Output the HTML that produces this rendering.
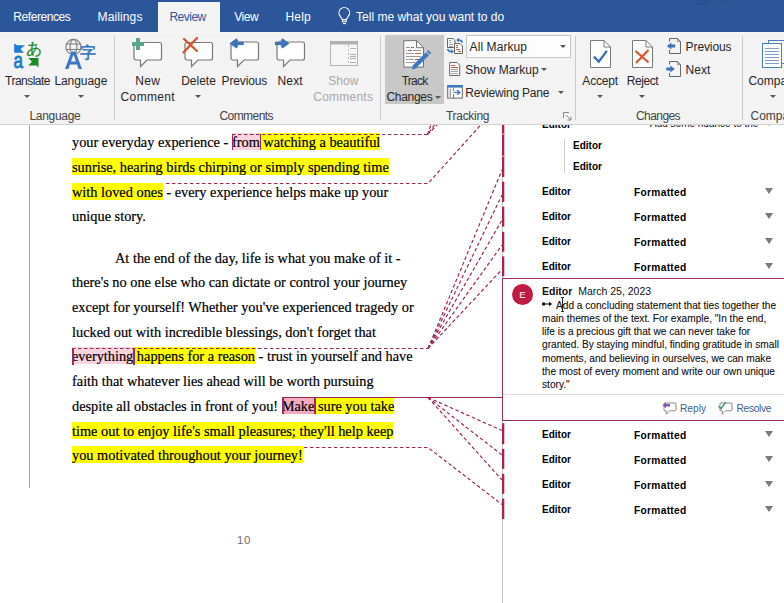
<!DOCTYPE html>
<html><head><meta charset="utf-8">
<style>
*{margin:0;padding:0;box-sizing:border-box}
html,body{width:784px;height:603px;overflow:hidden;background:#fff;position:relative}
body{font-family:"Liberation Sans",sans-serif;color:#262626}
.a{position:absolute;white-space:pre}
#tabs{position:absolute;left:0;top:0;width:784px;height:32px;background:#2b579a}
.tab{position:absolute;top:10px;font-size:12px;color:#fff;line-height:15px;white-space:pre}
#revtab{position:absolute;left:158px;top:2px;width:62px;height:30px;background:#f3f3f3}
#ribbon{position:absolute;left:0;top:32px;width:784px;height:93px;background:#f3f3f3;border-top:1px solid #f8f8f8;border-bottom:1px solid #d2d2d2}
.lbl{position:absolute;font-size:12px;line-height:15px;color:#262626;white-space:pre}
.glbl{position:absolute;top:109px;font-size:12px;line-height:15px;color:#444;white-space:pre}
.sep{position:absolute;top:36px;width:1px;height:84px;background:#c9c9c9}
.arr{position:absolute;width:0;height:0;border-left:3.5px solid transparent;border-right:3.5px solid transparent;border-top:3.5px solid #555}
.doc{position:absolute;white-space:pre;font-family:"Liberation Serif",serif;font-size:14.33px;line-height:24.6px;color:#000;-webkit-text-stroke:0.2px #000}
.hy{background:#ffff00;padding-top:1px}
.hp{background:#fad3df;padding-top:1px}
.hm{background:#f4a9bf;padding-top:1px}
.ed{position:absolute;font-weight:bold;font-size:10px;color:#000;line-height:13px}
.fm{position:absolute;font-weight:bold;font-size:10.2px;letter-spacing:0.3px;color:#000;line-height:13px}
.tri{position:absolute;width:0;height:0;border-left:4.5px solid transparent;border-right:4.5px solid transparent;border-top:6px solid #7a7a7a}
</style></head><body>

<div id="rb" style="position:absolute;left:0;top:0;width:784px;height:125px;z-index:10;overflow:hidden">
<div id="tabs">
  <div class="tab" style="left:13.3px;letter-spacing:-0.43px">References</div>
  <div class="tab" style="left:97.6px;letter-spacing:0.11px">Mailings</div>
  <div id="revtab"></div>
  <div style="position:absolute;left:696px;top:0;width:13px;height:5px;background:#2a5190"></div>
  <div style="position:absolute;left:716px;top:0;width:12px;height:3px;background:#2c5595"></div>
  <div class="tab" style="left:169.4px;color:#2b579a;letter-spacing:-0.5px">Review</div>
  <div class="tab" style="left:234.3px;letter-spacing:-0.5px">View</div>
  <div class="tab" style="left:285.5px;letter-spacing:0.2px">Help</div>
<svg class="a" style="left:332px;top:4px" width="24" height="24" viewBox="0 0 24 24">
  <path d="M10.4 15.6 L8.2 12.2 A5.3 5.3 0 1 1 16.4 12.2 L14.2 15.6 Z" fill="none" stroke="#fff" stroke-width="1.1" stroke-linejoin="round"/>
  <rect x="10.5" y="15.6" width="3.7" height="2.2" fill="none" stroke="#fff" stroke-width="1"/>
  <path d="M11 19.6 H13.8" stroke="#fff" stroke-width="1.1"/>
</svg>
  <div class="tab" style="left:356.1px">Tell me what you want to do</div>
</div>

<div id="ribbon"></div>
<!-- ribbon contents -->
<div class="sep" style="left:114px"></div>
<div class="sep" style="left:380px"></div>
<div class="sep" style="left:575px"></div>
<div class="sep" style="left:742px"></div>

<!-- Language group -->
<svg class="a" style="left:10px;top:38px" width="34" height="34" viewBox="0 0 34 34">
  <path d="M4.2 5.4 L7 7.3 L15 7.3 L10.5 11 L14 14.7 L4.2 14.7 Z" fill="#1a7ad4"/>
  <text x="3.6" y="29.7" font-family="Liberation Sans" font-size="17" fill="#1a7ad4" stroke="#1a7ad4" stroke-width="0.7" transform="translate(0,-9.6) scale(1,1.32)">a</text>
  <text x="15.6" y="16.3" font-family="Liberation Sans" font-size="15.5" fill="#1e8a2a" stroke="#1e8a2a" stroke-width="0.3">あ</text>
  <path d="M18.2 20 L28.5 20 L28.5 29.4 L26.5 27.5 L18.2 27.5 L22 23.7 Z" fill="#1e8a2a"/>
</svg>
<div class="lbl" style="left:5.1px;top:74px;letter-spacing:-0.53px">Translate</div>
<div class="arr" style="left:23.5px;top:95px"></div>

<svg class="a" style="left:62px;top:37px" width="36" height="34" viewBox="0 0 36 34">
  <g fill="none" stroke="#7d7d7d" stroke-width="1.1">
    <circle cx="11.5" cy="10" r="7.6"/>
    <ellipse cx="11.5" cy="10" rx="3.4" ry="7.6"/>
    <line x1="3.9" y1="7" x2="19.1" y2="7"/><line x1="3.9" y1="12.5" x2="19.1" y2="12.5"/>
  </g>
  <path d="M3 32 L9.5 14.5 L13.5 14.5 L20 32 L16.5 32 L15 27.5 L8 27.5 L6.5 32 Z M9 24.5 L14 24.5 L11.5 17.5 Z" fill="#3b78c0"/>
  <text x="18" y="20.5" font-family="Liberation Sans" font-size="15.5" fill="#3b78c0" stroke="#3b78c0" stroke-width="0.6">字</text>
</svg>
<div class="lbl" style="left:54.4px;top:74px;letter-spacing:-0.06px">Language</div>
<div class="arr" style="left:77.5px;top:95px"></div>
<div class="glbl" style="left:29.5px;letter-spacing:-0.3px">Language</div>

<!-- Comments group -->
<svg class="a" style="left:128px;top:36px" width="36" height="32" viewBox="0 0 36 32">
  <path d="M8 6.5 H31.5 A2 2 0 0 1 33.5 8.5 V22 A2 2 0 0 1 31.5 24 H19 L12.5 30.5 L12.5 24 H8 A2 2 0 0 1 6 22 V8.5 A2 2 0 0 1 8 6.5 Z" fill="#fff" stroke="#787878" stroke-width="1.2"/>
  <path d="M8 2 H12 V6 H16 V10 H12 V14 H8 V10 H4 V6 H8 Z" fill="#5ca58c"/>
</svg>
<div class="lbl" style="left:135.2px;top:74px;letter-spacing:0.3px">New</div>
<div class="lbl" style="left:120.6px;top:90px;letter-spacing:0.35px">Comment</div>

<svg class="a" style="left:180px;top:36px" width="36" height="32" viewBox="0 0 36 32">
  <path d="M7 6.5 H30.5 A2 2 0 0 1 32.5 8.5 V22 A2 2 0 0 1 30.5 24 H18 L11.5 30.5 L11.5 24 H7 A2 2 0 0 1 5 22 V8.5 A2 2 0 0 1 7 6.5 Z" fill="#fff" stroke="#787878" stroke-width="1.2"/>
  <path d="M4 3 L17 15 M17 2 L3.5 16.5" stroke="#d4552e" stroke-width="2.3" stroke-linecap="round"/>
</svg>
<div class="lbl" style="left:181.2px;top:74px">Delete</div>
<div class="arr" style="left:195px;top:95px"></div>

<svg class="a" style="left:226px;top:36px" width="36" height="32" viewBox="0 0 36 32">
  <path d="M7 6 H30.5 A2 2 0 0 1 32.5 8 V22 A2 2 0 0 1 30.5 24 H18 L11.5 30.5 L11.5 24 H7 A2 2 0 0 1 5 22 V8 A2 2 0 0 1 7 6 Z" fill="#fff" stroke="#787878" stroke-width="1.2"/>
  <path d="M11.5 3.5 L6.2 7.4 L11.5 11.3" fill="none" stroke="#3e73b5" stroke-width="3.2" stroke-linejoin="miter"/><path d="M6.5 7.4 H17.7" stroke="#3e73b5" stroke-width="3.4"/>
</svg>
<div class="lbl" style="left:221.6px;top:74px;letter-spacing:-0.14px">Previous</div>

<svg class="a" style="left:272px;top:36px" width="36" height="32" viewBox="0 0 36 32">
  <path d="M7 6 H30.5 A2 2 0 0 1 32.5 8 V22 A2 2 0 0 1 30.5 24 H18 L11.5 30.5 L11.5 24 H7 A2 2 0 0 1 5 22 V8 A2 2 0 0 1 7 6 Z" fill="#fff" stroke="#787878" stroke-width="1.2"/>
  <path d="M9.5 3.5 L14.8 7.4 L9.5 11.3" fill="none" stroke="#3e73b5" stroke-width="3.2" stroke-linejoin="miter"/><path d="M3 7.4 H14.5" stroke="#3e73b5" stroke-width="3.4"/>
</svg>
<div class="lbl" style="left:277.6px;top:74px;letter-spacing:0.1px">Next</div>

<svg class="a" style="left:329px;top:40px" width="30" height="27" viewBox="0 0 30 27">
  <rect x="1.5" y="1.5" width="27" height="24" fill="#f6f6f6" stroke="#b4b4b4" stroke-width="1"/>
  <rect x="1" y="1" width="28" height="3.5" fill="#b0b0b0"/>
  <path d="M19.5 5 V25" stroke="#b8b8b8" stroke-width="1" stroke-dasharray="2 2" shape-rendering="crispEdges"/>
  <g stroke="#b0b0b0" stroke-width="1" shape-rendering="crispEdges"><path d="M21 8.5 H27 M21 14.5 H27 M21 16.5 H27 M21 18.5 H27 M21 22.5 H27"/></g>
</svg>
<div class="lbl" style="left:328.3px;top:74px;color:#a8a8a8">Show</div>
<div class="lbl" style="left:313.3px;top:90px;color:#a8a8a8;letter-spacing:0.23px">Comments</div>
<div class="glbl" style="left:219.4px;letter-spacing:-0.54px">Comments</div>

<!-- Tracking group -->
<div class="a" style="left:385px;top:35px;width:59px;height:69px;background:#c8c8c8"></div>
<svg class="a" style="left:398px;top:36px" width="36" height="36" viewBox="0 0 36 36">
  <path d="M5.8 4.7 H18.5 L25.5 11.7 V31.1 H5.8 Z" fill="#fff" stroke="#707070" stroke-width="1"/>
  <path d="M18.5 4.7 V11.7 H25.5" fill="none" stroke="#707070" stroke-width="1"/>
  <g stroke-width="1" shape-rendering="crispEdges">
    <path d="M8 11.5 H12 M8 17.5 H16 M8 20.5 H23 M8 23.5 H16 M8 26.5 H17 M8 14.5 H9 M15 14.5 H23" stroke="#9a9a9a"/>
    <path d="M13 11.5 H16 M10 14.5 H14 M17 17.5 H23 M17 23.5 H21" stroke="#c0603a"/>
  </g>
  <path d="M14 33.4 L14.8 29.2 L28 16.2 L31 19.2 L17.8 32.4 Z" fill="#3e78c0"/>
  <path d="M28.8 15.4 L30.2 14 L33.2 17 L31.8 18.4 Z" fill="#3e78c0"/>
</svg>
<div class="lbl" style="left:401.7px;top:74px;letter-spacing:-0.77px">Track</div>
<div class="lbl" style="left:386.5px;top:89.5px;letter-spacing:-0.3px">Changes</div>
<div class="arr" style="left:435px;top:96px"></div>

<svg class="a" style="left:444px;top:34px" width="22" height="22" viewBox="0 0 22 22">
  <path d="M3.5 4.5 H9 L11 6.5 V13.5 H3.5 Z" fill="#fff" stroke="#666" stroke-width="1"/>
  <g stroke="#9a9a9a" stroke-width="0.9" shape-rendering="crispEdges"><path d="M5 6.5 H7 M5 8.5 H7 M5 10.5 H9 M5 12.5 H9"/></g>
  <path d="M10.5 9.5 H16 L18.5 12 V19.5 H10.5 Z" fill="#fff" stroke="#666" stroke-width="1"/>
  <g stroke="#b5502e" stroke-width="0.9" shape-rendering="crispEdges"><path d="M12 11.5 H14 M12 13.5 H14 M12 15.5 H16 M14 17.5 H17"/></g>
  <path d="M18.5 8.5 Q17.5 5.5 13.5 6" fill="none" stroke="#3e78c0" stroke-width="1.6"/>
  <path d="M12.2 6 L15 3.8 L15 8.2 Z" fill="#3e78c0"/>
  <path d="M3.6 15 Q4.5 18 8.5 17.5" fill="none" stroke="#3e78c0" stroke-width="1.6"/>
  <path d="M10 17.5 L7.2 15.3 L7.2 19.7 Z" fill="#3e78c0"/>
</svg>
<div class="a" style="left:466px;top:35px;width:105px;height:23px;background:#fdfdfd;border:1px solid #c6c6c6"></div>
<div class="lbl" style="left:469.6px;top:40px;letter-spacing:0.08px">All Markup</div>
<div class="arr" style="left:559.5px;top:45px"></div>

<svg class="a" style="left:444px;top:58px" width="22" height="22" viewBox="0 0 22 22">
  <path d="M5.7 4.5 H13 L15.7 7.2 V17.5 H5.7 Z" fill="#fff" stroke="#666" stroke-width="1"/>
  <g stroke-width="0.9" shape-rendering="crispEdges"><path d="M7.2 7.5 H11 M7.2 9.5 H14" stroke="#b5502e"/><path d="M7.2 11.5 H14 M7.2 13.5 H14 M7.2 15.5 H14" stroke="#9a9a9a"/></g>
</svg>
<div class="lbl" style="left:465.3px;top:63px">Show Markup</div>
<div class="arr" style="left:541px;top:68px"></div>

<svg class="a" style="left:444px;top:80px" width="22" height="22" viewBox="0 0 22 22">
  <rect x="3.7" y="6" width="14.6" height="12.1" fill="#fff" stroke="#666" stroke-width="1"/>
  <rect x="3.2" y="5" width="15.6" height="2.6" fill="#3e78c0"/>
  <path d="M6.2 9 V17 M9.5 7.5 V11 M9.5 14 V18.5" stroke="#777" stroke-width="1" fill="none"/>
  <path d="M9.5 12.4 H15.5 M13 10 L15.8 12.4 L13 14.8" fill="none" stroke="#3e78c0" stroke-width="1.3"/>
</svg>
<div class="lbl" style="left:465.3px;top:86px;letter-spacing:-0.2px">Reviewing Pane</div>
<div class="arr" style="left:558px;top:91px"></div>
<div class="glbl" style="left:446px;letter-spacing:-0.3px">Tracking</div>
<svg class="a" style="left:563px;top:112px" width="9" height="9" viewBox="0 0 9 9">
  <path d="M0.5 0.5 H6 M0.5 0.5 V6" stroke="#8a8a8a" stroke-width="1" fill="none"/>
  <path d="M3 3 L8 8 M8 4.5 V8 H4.5" stroke="#8a8a8a" stroke-width="1" fill="none"/>
</svg>

<!-- Changes group -->
<svg class="a" style="left:588px;top:38px" width="26" height="32" viewBox="0 0 26 32">
  <path d="M2.5 2.5 H16 L22.5 9 V29.5 H2.5 Z" fill="#fff" stroke="#7a7a7a" stroke-width="1"/>
  <path d="M16 2.5 V9 H22.5" fill="none" stroke="#7a7a7a" stroke-width="1"/>
  <path d="M6 18.6 L10.8 23.7 L18.9 12.9" fill="none" stroke="#3a70b2" stroke-width="2.4"/>
</svg>
<div class="lbl" style="left:582.3px;top:74px;letter-spacing:-0.16px">Accept</div>
<div class="arr" style="left:597px;top:95px"></div>

<svg class="a" style="left:630px;top:38px" width="26" height="32" viewBox="0 0 26 32">
  <path d="M2.5 2.5 H16 L22.5 9 V29.5 H2.5 Z" fill="#fff" stroke="#7a7a7a" stroke-width="1"/>
  <path d="M16 2.5 V9 H22.5" fill="none" stroke="#7a7a7a" stroke-width="1"/>
  <path d="M5.5 13 L18.5 24.5 M18.5 12 L6 25" fill="none" stroke="#d4552e" stroke-width="2.2"/>
</svg>
<div class="lbl" style="left:626.7px;top:74px;letter-spacing:-0.4px">Reject</div>
<div class="arr" style="left:638.5px;top:95px"></div>

<svg class="a" style="left:665px;top:37px" width="18" height="18" viewBox="0 0 18 18">
  <path d="M4.5 4.5 V1.5 H12.5 L15.5 4.5 V16.5 H4.5 V13" fill="none" stroke="#666" stroke-width="1"/>
  <path d="M12.5 1.5 V4.5 H15.5" fill="none" stroke="#777" stroke-width="0.8"/>
  <path d="M1.8 9 L6.3 5.6 V7.6 H10.2 V10.4 H6.3 V12.4 Z" fill="#3e73b5"/>
</svg>
<div class="lbl" style="left:685.6px;top:40px;letter-spacing:-0.1px">Previous</div>
<svg class="a" style="left:665px;top:60px" width="18" height="18" viewBox="0 0 18 18">
  <path d="M4.5 4.5 V1.5 H12.5 L15.5 4.5 V16.5 H4.5 V13" fill="none" stroke="#666" stroke-width="1"/>
  <path d="M12.5 1.5 V4.5 H15.5" fill="none" stroke="#777" stroke-width="0.8"/>
  <path d="M9.8 9 L5.3 5.6 V7.6 H1.3 V10.4 H5.3 V12.4 Z" fill="#3e73b5"/>
</svg>
<div class="lbl" style="left:685.6px;top:63px">Next</div>
<div class="glbl" style="left:636px;letter-spacing:-0.57px">Changes</div>

<!-- Compare group -->
<svg class="a" style="left:760px;top:38px" width="24" height="32" viewBox="0 0 24 32">
  <rect x="8.5" y="2.5" width="20" height="23" fill="#fff" stroke="#4a7fb8" stroke-width="1"/>
  <rect x="2.5" y="5.5" width="19" height="24" fill="#fff" stroke="#4a7fb8" stroke-width="1"/>
  <g stroke="#7f9fc6" stroke-width="1" shape-rendering="crispEdges"><path d="M5 10.5 H19 M5 13.5 H19 M5 16.5 H19 M5 19.5 H19 M5 22.5 H19 M5 25.5 H19"/></g>
</svg>
<div class="lbl" style="left:748.4px;top:74px">Compare</div>
<div class="arr" style="left:769.5px;top:95px"></div>
<div class="glbl" style="left:750.5px">Compare</div>


</div>
<!-- document -->
<div class="a" style="left:29px;top:125px;width:1px;height:363px;background:#a8a8a8"></div>
<div class="a" style="left:502px;top:125px;width:1px;height:478px;background:#c8c8c8"></div>

<div class="doc" style="left:72px;top:130px">your everyday experience - <span class="hp">from</span><span class="hy"> watching a beautiful</span></div>
<div class="doc" style="left:72px;top:155px"><span class="hy">sunrise, hearing birds chirping or simply spending time</span></div>
<div class="doc" style="left:72px;top:180px"><span class="hy">with loved ones</span> - every experience helps make up your</div>
<div class="doc" style="left:72px;top:204px">unique story.</div>
<div class="doc" style="left:115px;top:246px">At the end of the day, life is what you make of it -</div>
<div class="doc" style="left:72px;top:270px">there's no one else who can dictate or control your journey</div>
<div class="doc" style="left:72px;top:295px">except for yourself! Whether you've experienced tragedy or</div>
<div class="doc" style="left:72px;top:320px">lucked out with incredible blessings, don't forget that</div>
<div class="doc" style="left:72px;top:344px"><span class="hp">everything</span><span class="hy"> happens for a reason</span> - trust in yourself and have</div>
<div class="doc" style="left:72px;top:369px">faith that whatever lies ahead will be worth pursuing</div>
<div class="doc" style="left:72px;top:394px">despite all obstacles in front of you! <span class="hm">Make</span><span class="hy"> sure you take</span></div>
<div class="doc" style="left:72px;top:419px"><span class="hy">time out to enjoy life's small pleasures; they'll help keep</span></div>
<div class="doc" style="left:72px;top:443px"><span class="hy">you motivated throughout your journey!</span></div>


<!-- leader lines & change bars -->
<svg class="a" style="left:0;top:125px" width="784" height="478" viewBox="0 125 784 478">
  <g fill="none" stroke="#9c2858" stroke-width="1.2" stroke-dasharray="3.5 2.5">
    <path d="M232 134.5 H427.5 L441 116"/>
    <path d="M427.5 134.5 L434 116"/>
    <path d="M427.5 134.5 L446 116"/>
    <path d="M166 183.5 H428 L487 118"/>
    <path d="M72 348.5 H428"/>
    <path d="M428 348.5 L502 170"/>
    <path d="M428 348.5 L502 195"/>
    <path d="M428 348.5 L502 220"/>
    <path d="M428 348.5 L502 245"/>
    <path d="M428 348.5 L502 269.5"/>
    <path d="M428 397.5 L502 430.5"/>
    <path d="M428 397.5 L502 455"/>
    <path d="M428 397.5 L502 480"/>
    <path d="M304 447.5 H428 L502 504.5"/>
  </g>
  <path d="M282 397.5 H502.5" stroke="#9e2a55" stroke-width="1.2" fill="none"/>
  <g fill="#ad2150">
    <rect x="502" y="124" width="2.3" height="53"/>
    <rect x="502" y="181.7" width="2.3" height="20.3"/>
    <rect x="502" y="206.6" width="2.3" height="20"/>
    <rect x="502" y="231.8" width="2.3" height="20"/>
    <rect x="502" y="256.4" width="2.3" height="20"/>
    <rect x="502" y="423.2" width="2.3" height="21"/>
    <rect x="502" y="448.8" width="2.3" height="20"/>
    <rect x="502" y="473.8" width="2.3" height="20"/>
    <rect x="502" y="498.6" width="2.3" height="20.5"/>
  </g>
  <g fill="#f0b8c8"><rect x="502" y="133.5" width="2.3" height="1"/><rect x="502" y="155.7" width="2.3" height="1"/></g>
</svg>

<!-- markup boxes around deletions -->
<div class="a" style="left:232px;top:134px;width:1.3px;height:16px;background:#a3295a"></div>
<div class="a" style="left:260px;top:134px;width:1.3px;height:16px;background:#a3295a"></div>
<div class="a" style="left:72px;top:348px;width:1.5px;height:17px;background:#a3295a"></div>
<div class="a" style="left:133px;top:348px;width:1.5px;height:17px;background:#a3295a"></div>
<div class="a" style="left:282px;top:397px;width:2px;height:17px;background:#a3295a"></div>
<div class="a" style="left:314px;top:397px;width:1.5px;height:17px;background:#a3295a"></div>

<!-- reviewing pane -->
<div class="ed" style="left:542px;top:118px">Editor</div>
<div class="a" style="left:650px;top:118px;font-size:10px;color:#111">Add some nuance to the</div><div class="tri" style="left:764.5px;top:119.5px"></div>
<div class="a" style="left:564px;top:139px;width:1px;height:34px;background:#cfcfcf"></div>
<div class="ed" style="left:573px;top:139px">Editor</div>
<div class="ed" style="left:573px;top:160px">Editor</div>

<div class="ed" style="left:542px;top:185px">Editor</div><div class="fm" style="left:634px;top:186px">Formatted</div><div class="tri" style="left:764.5px;top:187.5px"></div>
<div class="ed" style="left:542px;top:210px">Editor</div><div class="fm" style="left:634px;top:211px">Formatted</div><div class="tri" style="left:764.5px;top:212.5px"></div>
<div class="ed" style="left:542px;top:235px">Editor</div><div class="fm" style="left:634px;top:236px">Formatted</div><div class="tri" style="left:764.5px;top:237.5px"></div>
<div class="ed" style="left:542px;top:260px">Editor</div><div class="fm" style="left:634px;top:261px">Formatted</div><div class="tri" style="left:764.5px;top:262.5px"></div>

<div class="a" style="left:502px;top:278px;width:290px;height:143px;border:1.2px solid #9e2a55;background:#fff"></div>
<div class="a" style="left:504px;top:394px;width:280px;height:1px;background:#dcdcdc"></div>
<div class="a" style="left:512px;top:284px;width:21px;height:21px;border-radius:50%;background:#c21a40;color:#fff;font-size:9.5px;line-height:21px;text-align:center">E</div>
<div class="a" style="left:542px;top:285px;font-size:10.5px;line-height:13px;color:#111"><b>Editor</b>  March 25, 2023</div>
<div class="a" style="left:542px;top:298.5px;font-size:10.15px;line-height:13.3px;color:#111;-webkit-text-stroke:0.1px #111"><span style="display:inline-block;width:14px"></span>Add a concluding statement that ties together the
main themes of the text. For example, "In the end,
life is a precious gift that we can never take for
granted. By staying mindful, finding gratitude in small
moments, and believing in ourselves, we can make
the most of every moment and write our own unique
story."</div>
<svg class="a" style="left:540px;top:300px" width="14" height="8" viewBox="0 0 14 8"><circle cx="3.6" cy="4" r="1.7" fill="#111"/><path d="M5 4 H11" stroke="#111" stroke-width="1.1"/><path d="M9 1.8 L12.2 4 L9 6.2 Z" fill="#111"/></svg>
<svg class="a" style="left:558px;top:296px" width="10" height="18" viewBox="0 0 10 18"><path d="M3 1.5 H4.5 V15.5 H3 M4.5 1.5 H6 M4.5 15.5 H6 M4.5 8.5 H6" fill="none" stroke="#111" stroke-width="0.9"/></svg>
<svg class="a" style="left:662px;top:400px" width="16" height="16" viewBox="0 0 16 16">
  <path d="M3 3 H13 A1 1 0 0 1 14 4 V9.8 A1 1 0 0 1 13 10.8 H7.5 L4.3 14.2 V10.8 H3 A1 1 0 0 1 2 9.8 V4 A1 1 0 0 1 3 3 Z" fill="#fff" stroke="#8a8a8a" stroke-width="1"/>
  <path d="M0.6 5.2 L4 2.2 V4 H8 V6.4 H4 V8.2 Z" fill="#8b4fb5"/>
</svg>
<div class="a" style="left:680px;top:402px;font-size:10.2px;line-height:13px;color:#3d5d8f">Reply</div>
<svg class="a" style="left:717px;top:400px" width="16" height="16" viewBox="0 0 16 16">
  <path d="M4 3 H14 A1 1 0 0 1 15 4 V9.8 A1 1 0 0 1 14 10.8 H8.5 L5.3 14.2 V10.8 H4 A1 1 0 0 1 3 9.8 V4 A1 1 0 0 1 4 3 Z" fill="#fff" stroke="#8a8a8a" stroke-width="1"/>
  <path d="M1.5 6 L4 8.8 L8.8 2" fill="none" stroke="#4a9a7a" stroke-width="1.5"/>
</svg>
<div class="a" style="left:736.5px;top:402px;font-size:10.2px;letter-spacing:-0.3px;line-height:13px;color:#3d5d8f">Resolve</div>

<div class="ed" style="left:542px;top:428px">Editor</div><div class="fm" style="left:634px;top:429px">Formatted</div><div class="tri" style="left:764.5px;top:430.5px"></div>
<div class="ed" style="left:542px;top:453px">Editor</div><div class="fm" style="left:634px;top:454px">Formatted</div><div class="tri" style="left:764.5px;top:455.5px"></div>
<div class="ed" style="left:542px;top:478px">Editor</div><div class="fm" style="left:634px;top:479px">Formatted</div><div class="tri" style="left:764.5px;top:480.5px"></div>
<div class="ed" style="left:542px;top:503px">Editor</div><div class="fm" style="left:634px;top:504px">Formatted</div><div class="tri" style="left:764.5px;top:505.5px"></div>

<div class="a" style="left:237px;top:533.5px;font-size:11.5px;letter-spacing:0.6px;color:#707070">10</div>

</body></html>
